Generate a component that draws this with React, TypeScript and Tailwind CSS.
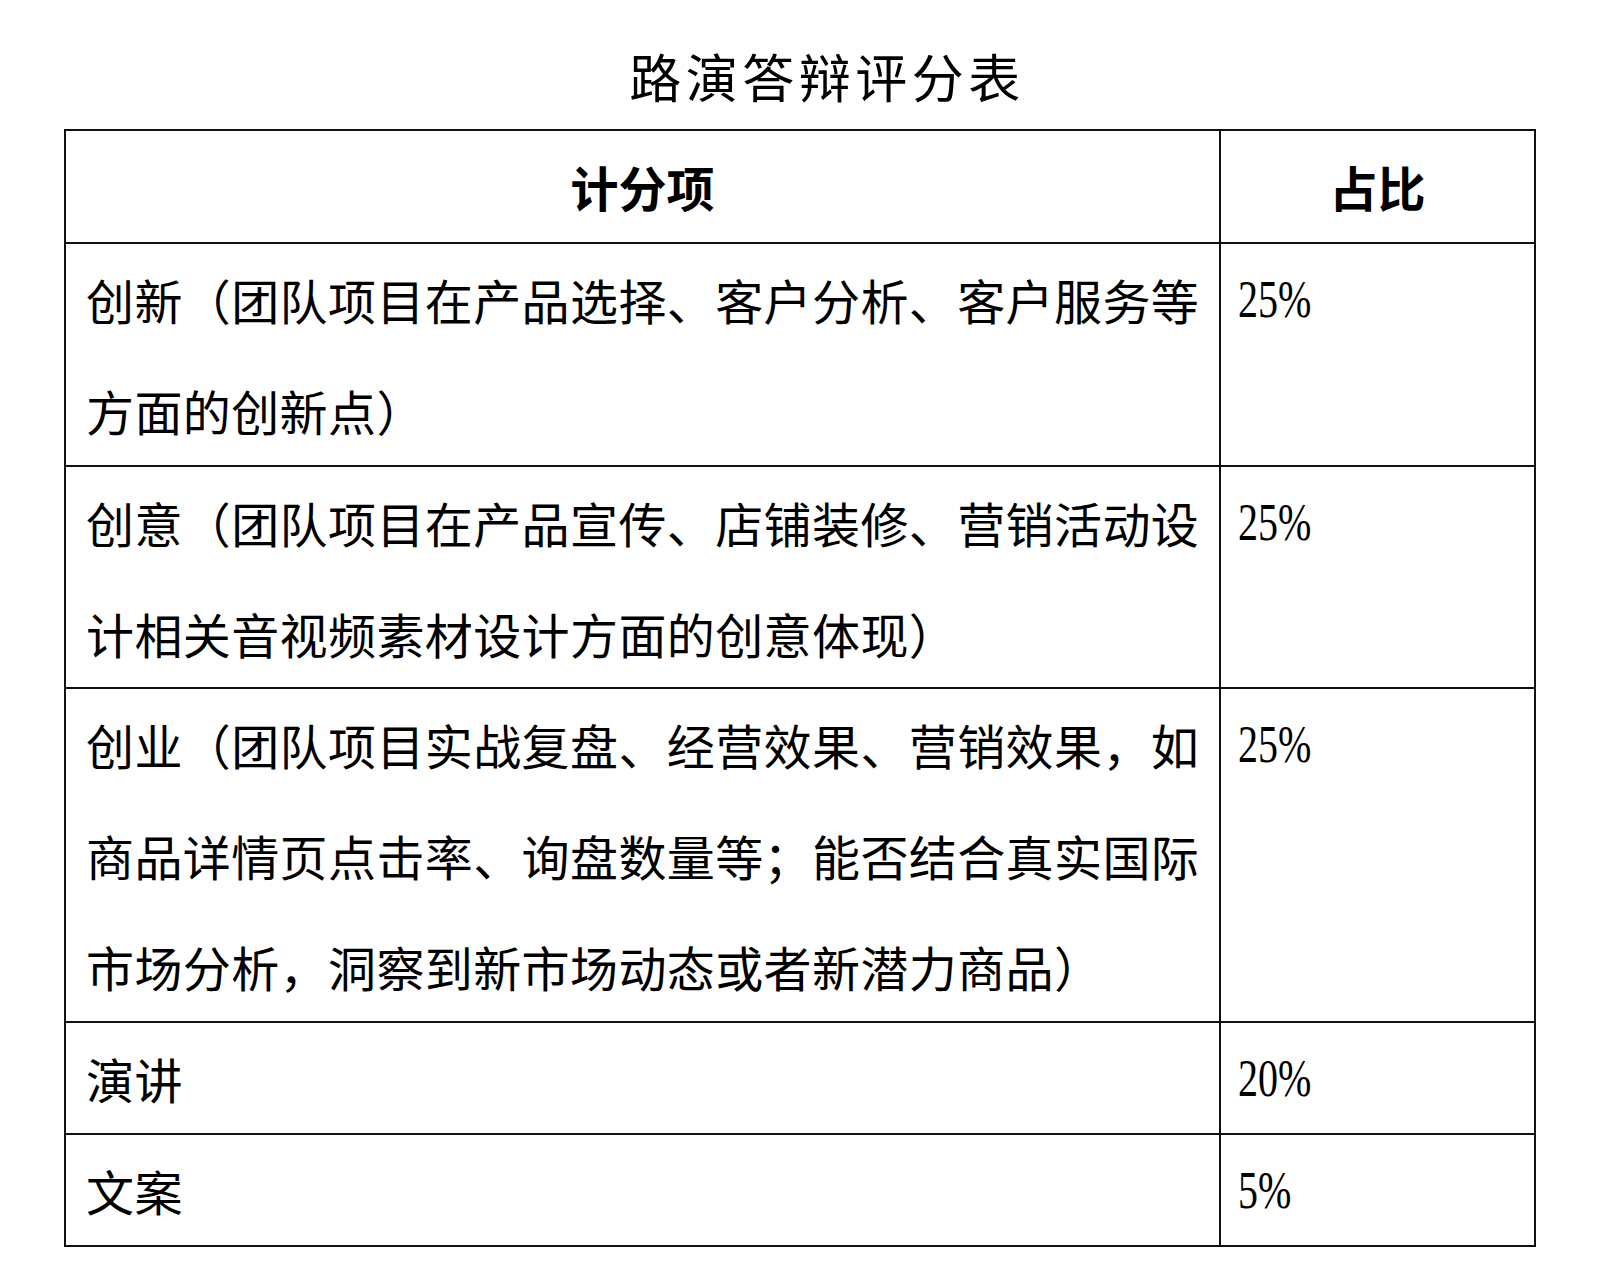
import React from 'react';

interface ScoreRow {
  lines: string[];
  ratio: string;
  rowClass: string;
}

const rows: ScoreRow[] = [
  {
    lines: ['创新（团队项目在产品选择、客户分析、客户服务等', '方面的创新点）'],
    ratio: '25%',
    rowClass: 'h-[223px]',
  },
  {
    lines: ['创意（团队项目在产品宣传、店铺装修、营销活动设', '计相关音视频素材设计方面的创意体现）'],
    ratio: '25%',
    rowClass: 'h-[222px]',
  },
  {
    lines: [
      '创业（团队项目实战复盘、经营效果、营销效果，如',
      '商品详情页点击率、询盘数量等；能否结合真实国际',
      '市场分析，洞察到新市场动态或者新潜力商品）',
    ],
    ratio: '25%',
    rowClass: 'h-[334px]',
  },
  { lines: ['演讲'], ratio: '20%', rowClass: 'h-[112px]' },
  { lines: ['文案'], ratio: '5%', rowClass: 'h-[112px]' },
];

const cjk = "font-['Noto_Sans_CJK_SC',sans-serif] [text-spacing-trim:space-all]";

const App: React.FC = () => {
  return (
    <div className="min-h-screen w-[1614px] bg-white text-black">
      <div className={`h-[129px] pt-[40px] pl-[40px] flex justify-center ${cjk}`}>
        <h1 className="text-[52px] leading-[72px] tracking-[4.5px] font-normal">路演答辩评分表</h1>
      </div>

      <div className="ml-[64px] w-[1472px] border-2 border-[#111]">
        {/* header */}
        <div className={`grid grid-cols-[1155px_1fr] h-[111px] overflow-hidden ${cjk}`}>
          <div className="border-r-2 border-[#111] flex items-center justify-center text-[48px] leading-[111px] font-bold">
            计分项
          </div>
          <div className="flex items-center justify-center text-[48px] leading-[111px] font-bold">
            占比
          </div>
        </div>

        {rows.map((row, i) => (
          <div
            key={i}
            className={`grid grid-cols-[1155px_1fr] border-t-2 border-[#111] overflow-hidden ${row.rowClass}`}
          >
            <div className={`border-r-2 border-[#111] pl-[20px] text-[48px] leading-[111px] tracking-[0.4px] ${cjk}`}>
              {row.lines.map((line, j) => (
                <div key={j} className="whitespace-nowrap">
                  {line}
                </div>
              ))}
            </div>
            <div className="pl-[17px] leading-[111px]">
              <span className="inline-block origin-left scale-x-[0.77] text-[52px] font-['Liberation_Serif',serif]">
                {row.ratio}
              </span>
            </div>
          </div>
        ))}
      </div>
    </div>
  );
};

export default App;
